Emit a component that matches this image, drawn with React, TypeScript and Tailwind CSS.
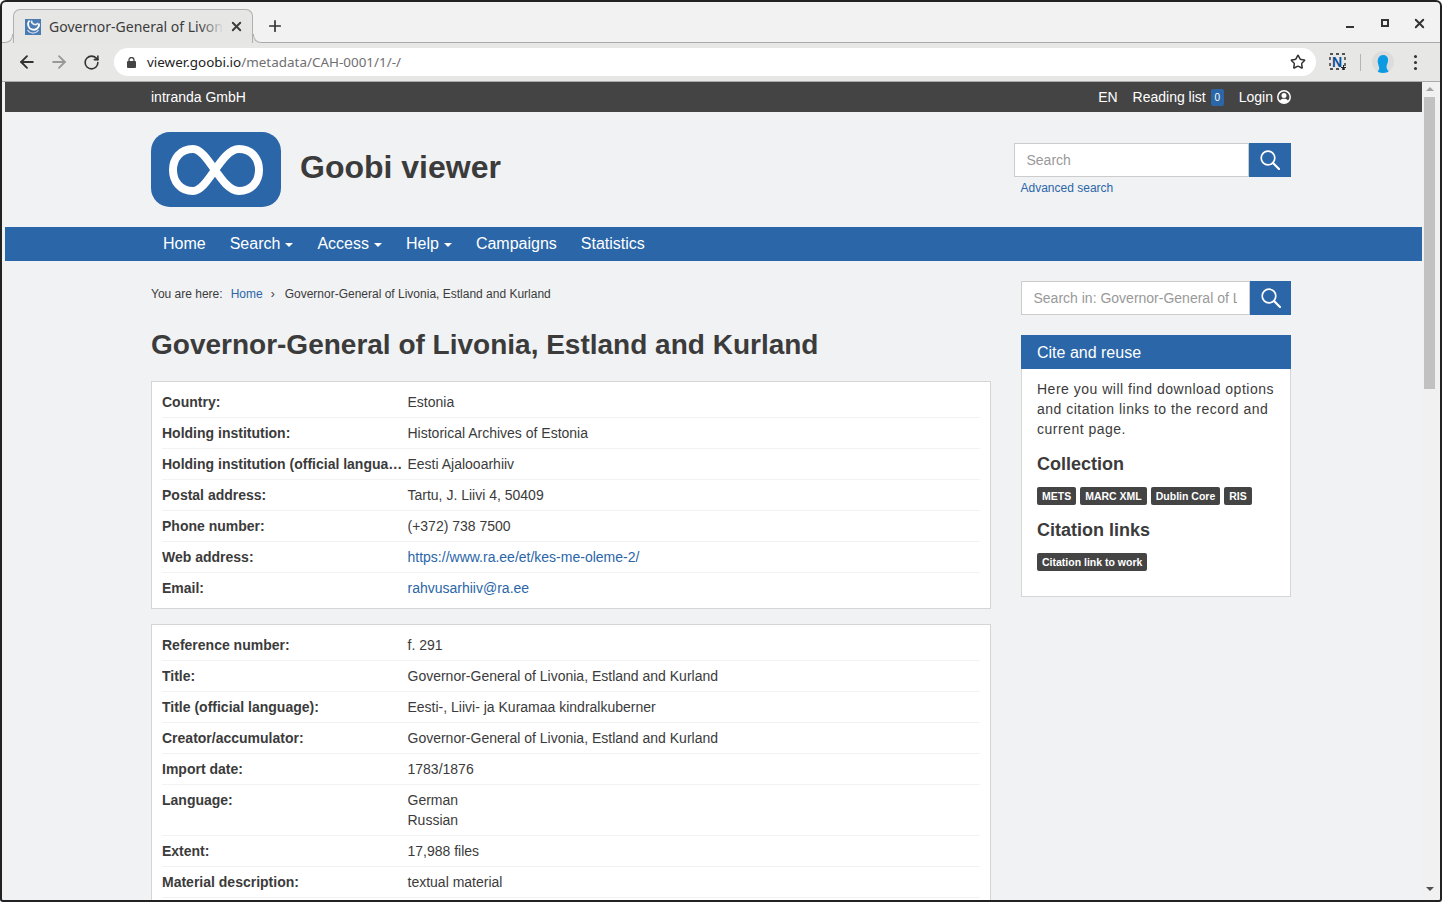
import { Star, ArrowLeft, ArrowRight, RotateCw, X, Plus } from "lucide-react";

const firstTable: [string, string, boolean?][] = [
  ["Country:", "Estonia"],
  ["Holding institution:", "Historical Archives of Estonia"],
  ["Holding institution (official language):", "Eesti Ajalooarhiiv"],
  ["Postal address:", "Tartu, J. Liivi 4, 50409"],
  ["Phone number:", "(+372) 738 7500"],
  ["Web address:", "https://www.ra.ee/et/kes-me-oleme-2/", true],
  ["Email:", "rahvusarhiiv@ra.ee", true],
];

const secondTable: [string, string][] = [
  ["Reference number:", "f. 291"],
  ["Title:", "Governor-General of Livonia, Estland and Kurland"],
  ["Title (official language):", "Eesti-, Liivi- ja Kuramaa kindralkuberner"],
  ["Creator/accumulator:", "Governor-General of Livonia, Estland and Kurland"],
  ["Import date:", "1783/1876"],
  ["Language:", "German\nRussian"],
  ["Extent:", "17,988 files"],
  ["Material description:", "textual material"],
];

function Row({ label, value, link, last }: { label: string; value: string; link?: boolean; last?: boolean }) {
  return (
    <div className={`flex pt-[5px] pb-[5px] leading-[20px] ${last ? "" : "border-b border-[#f1f2f4]"}`}>
      <div className="w-[245.5px] shrink-0 truncate pr-1 font-bold">{label}</div>
      <div className={`whitespace-pre-line ${link ? "text-[#2a66a8]" : ""}`}>{value}</div>
    </div>
  );
}

function SearchBox({ placeholder, inputWidth, buttonWidth }: { placeholder: string; inputWidth: string; buttonWidth: string }) {
  return (
    <div className="flex h-[34px]">
      <div className={`flex items-center overflow-hidden whitespace-nowrap border border-[#ccc] bg-white pl-[11.5px] pr-3 text-[14px] text-[#999] ${inputWidth}`}>
        <span className="block w-full overflow-hidden">{placeholder}</span>
      </div>
      <div className={`flex items-center justify-center bg-[#2a66a8] text-white ${buttonWidth}`}>
        <svg width="20" height="20" viewBox="0 0 20 20" fill="none" stroke="currentColor">
          <circle cx="8" cy="8" r="6.8" strokeWidth="1.7" />
          <path d="M13 13l6 6" strokeWidth="2.2" strokeLinecap="round" />
        </svg>
      </div>
    </div>
  );
}

function NavItem({ label, caret }: { label: string; caret?: boolean }) {
  return (
    <div className="flex items-center px-3">
      {label}
      {caret && <span className="ml-[5px] mt-[2px] h-0 w-0 border-x-4 border-t-4 border-x-transparent border-t-white" />}
    </div>
  );
}

function Badge({ label }: { label: string }) {
  return (
    <span className="rounded-[2px] bg-[#444] px-[5px] text-[10.5px] font-bold leading-[18px] text-white">{label}</span>
  );
}

export default function App() {
  return (
    <div className="h-[902px] w-[1442px] overflow-hidden rounded-t-[6px] rounded-b-[3px] bg-[#222] p-[2px] font-['Liberation_Sans',Arial,sans-serif]">
      <div className="flex h-[898px] flex-col overflow-hidden rounded-t-[4px] rounded-b-[1px] bg-[#f2f2f2]">
        {/* tab strip */}
        <div className="relative flex h-[41px] shrink-0 items-end border-b border-[#a9a9a9] pl-[11px] font-['Noto_Sans',sans-serif]">
          <div className="relative -mb-px flex h-[34px] w-[240px] items-center rounded-t-[7px] border border-b-0 border-[#b0b0b0] bg-[#e6e6e5] pl-[11px] pr-[8px] text-[14px] text-[#3c3c3c]">
            <span className="absolute -left-[9px] bottom-0 h-[9px] w-[8px] bg-[#e6e6e5]">
              <span className="block h-[9px] w-[8px] rounded-br-[8px] border-b border-r border-[#b0b0b0] bg-[#f2f2f2]" />
            </span>
            <span className="absolute -right-[9px] bottom-0 h-[9px] w-[8px] bg-[#e6e6e5]">
              <span className="block h-[9px] w-[8px] rounded-bl-[8px] border-b border-l border-[#b0b0b0] bg-[#f2f2f2]" />
            </span>
            <svg width="16" height="16" viewBox="0 0 16 16" className="shrink-0">
              <rect width="16" height="16" fill="#4a7bb3" />
              <path d="M4.500 1.500a5.500 5.500 0 1 0 9.500 3" fill="none" stroke="#fff" strokeWidth="1.800" />
              <path d="M6.500 1.500a3.600 3.600 0 0 0 6.500 2.500" fill="none" stroke="#e8eef6" strokeWidth="1.600" />
              <path d="M2.500 11a6.500 6.500 0 0 0 11 0" fill="none" stroke="#cfdcec" strokeWidth="1.200" />
            </svg>
            <span className="relative mb-[1px] ml-2 w-[175px] overflow-hidden whitespace-nowrap">
              Governor-General of Livonia
              <span className="absolute inset-y-0 right-0 w-[24px] bg-gradient-to-r from-transparent to-[#e6e6e5]" />
            </span>
            <X size={15} strokeWidth={3} className="ml-auto text-[#3c3c3c]" />
          </div>
          <Plus size={18} strokeWidth={2.25} className="mb-[7px] ml-[13px] text-[#333]" />
          <div className="absolute right-[13px] top-[13px] flex h-[16px] items-center text-[#333]">
            <span className="mt-[7px] h-[2px] w-[8px] bg-[#333]" />
            <span className="ml-[27px] h-[8px] w-[8px] border-2 border-[#333]" />
            <X size={15} strokeWidth={3} className="ml-[23px]" />
          </div>
        </div>
        {/* toolbar */}
        <div className="flex h-[39px] shrink-0 items-center border-b border-[#a9a9a9] bg-[#e7e7e6] font-['Noto_Sans',sans-serif]">
          <ArrowLeft size={20} strokeWidth={2.25} className="ml-[15px] text-[#333]" />
          <ArrowRight size={20} strokeWidth={2.25} className="ml-[12px] text-[#999]" />
          <RotateCw size={17} strokeWidth={2.25} className="ml-[14px] text-[#333]" />
          <div className="ml-[14px] flex h-[28px] w-[1202px] items-center rounded-full bg-white pl-[13px] text-[13.45px]">
            <svg width="9" height="11" viewBox="0 0 9 11">
              <path d="M2 4.500V3a2.500 2.500 0 0 1 5 0v1.500" fill="none" stroke="#444" strokeWidth="1.300" />
              <rect y="4" width="9" height="7" rx="1" fill="#444" />
            </svg>
            <span className="ml-[11px] text-[#222]">viewer.goobi.io</span>
            <span className="text-[#6f6f6f]">/metadata/CAH-0001/1/-/</span>
            <Star size={16} strokeWidth={2.25} className="ml-auto mr-[10px] text-[#333]" />
          </div>
          <svg width="18" height="18" viewBox="0 0 18 18" className="ml-[13px]">
            <rect x="1" y="1" width="15" height="15" fill="none" stroke="#222" strokeWidth="1.300" strokeDasharray="3 3" />
            <text x="3" y="14" fontSize="14" fontWeight="700" fill="#0b4f9e" fontFamily="Liberation Sans">N</text>
            <path d="M14.500 12v5M12 14.500h5" stroke="#222" strokeWidth="1" />
          </svg>
          <span className="ml-[13px] h-[17px] w-px bg-[#b5b5b5]" />
          <span className="ml-[11px] flex h-[22px] w-[22px] items-end justify-center overflow-hidden rounded-full bg-[#dcdcdc]">
            <svg width="12" height="18" viewBox="0 0 12 18">
              <path d="M6 0c3.500 0 5.500 2.500 5 6-.4 2.500-1.500 4-1.500 6 0 1.500 1 3 2 4v2H1v-2c1-1 1.500-2 1-4C1.500 10 1 9 .8 7.500.3 3.500 2.500 0 6 0z" fill="#0b9be3" />
            </svg>
          </span>
          <span className="ml-[20px] flex flex-col gap-[3px]">
            <span className="h-[3px] w-[3px] rounded-full bg-[#333]" />
            <span className="h-[3px] w-[3px] rounded-full bg-[#333]" />
            <span className="h-[3px] w-[3px] rounded-full bg-[#333]" />
          </span>
        </div>
        {/* page + scrollbar */}
        <div className="flex min-h-0 flex-1 pl-[3px]">
          <div className="w-[1417px] min-w-0 bg-[#f1f2f4] text-[14px] text-[#3b3b3b]">
            <div className="flex h-[30px] items-center justify-between bg-[#444] pl-[146px] pr-[131px] text-[14px] text-white">
              <span>intranda GmbH</span>
              <div className="flex items-center">
                <span>EN</span>
                <span className="ml-[15px]">Reading list</span>
                <span className="ml-[5px] flex h-[17px] w-[13px] items-center justify-center rounded-[2px] bg-[#2a66a8] text-[10px]">0</span>
                <span className="ml-[15px]">Login</span>
                <svg width="14" height="14" viewBox="0 0 14 14" className="ml-[4px]">
                  <circle cx="7" cy="7" r="6.2" fill="none" stroke="#fff" strokeWidth="1.500" />
                  <circle cx="7" cy="5.400" r="2.500" fill="#fff" />
                  <path d="M2.800 11.300C3.500 9.400 5 8.800 7 8.800s3.500.6 4.200 2.500C10 12.500 8.500 13 7 13s-3-.5-4.200-1.700z" fill="#fff" />
                </svg>
              </div>
            </div>

            <div className="flex h-[115px] pl-[146px] pr-[131px] pt-[20px]">
              <div className="flex h-[75px] w-[130px] items-center justify-center rounded-[19px] bg-[#2a66a8]">
                <svg width="96" height="54" viewBox="0 0 96 54">
                  <path d="M25 6C12 6 5 16 5 27s7 21 20 21c15 0 28-42 46-42 13 0 20 10 20 21s-7 21-20 21C53 48 40 6 25 6z" fill="none" stroke="#fff" strokeWidth="8" />
                </svg>
              </div>
              <div className="ml-[19px] mt-[16px] text-[32px] font-bold leading-[38px]">Goobi viewer</div>
              <div className="ml-auto mt-[11px] w-[277px]">
                <SearchBox placeholder="Search" inputWidth="w-[235px]" buttonWidth="w-[42px]" />
                <div className="ml-[6.5px] mt-[4px] text-[12px] leading-[14px] text-[#2a66a8]">Advanced search</div>
              </div>
            </div>

            <div className="flex h-[34px] items-center bg-[#2a66a8] pl-[146px] text-[16px] text-white">
              <NavItem label="Home" />
              <NavItem label="Search" caret />
              <NavItem label="Access" caret />
              <NavItem label="Help" caret />
              <NavItem label="Campaigns" />
              <NavItem label="Statistics" />
            </div>

            <div className="flex pl-[146px] pt-[20px]">
              <main className="w-[840px]">
                <div className="flex h-[26px] items-center text-[12px]">
                  <span>You are here:</span>
                  <span className="ml-[8px] text-[#2a66a8]">Home</span>
                  <span className="ml-[8px] mr-[10px]">›</span>
                  <span>Governor-General of Livonia, Estland and Kurland</span>
                </div>
                <h1 className="mt-[20px] text-[28px] font-bold leading-[36px]">Governor-General of Livonia, Estland and Kurland</h1>
                <div className="mt-[18px] border border-[#d5d5d5] bg-white px-[10px] pb-[5px] pt-[4.5px]">
                  {firstTable.map(([label, value, link], i) => (
                    <Row key={label} label={label} value={value} link={link} last={i === firstTable.length - 1} />
                  ))}
                </div>
                <div className="mt-[15px] border border-[#d5d5d5] bg-white px-[10px] pb-[4.5px] pt-[5.5px]">
                  {secondTable.map(([label, value]) => (
                    <Row key={label} label={label} value={value} />
                  ))}
                </div>
              </main>
              <aside className="ml-[30px] w-[270px]">
                <SearchBox placeholder="Search in: Governor-General of Livonia" inputWidth="w-[229px]" buttonWidth="w-[41px]" />
                <div className="mt-[20px] border-x border-b border-[#d5d5d5] bg-white">
                  <div className="-mx-px flex h-[34px] items-center bg-[#2a66a8] px-[16px] pt-[2px] text-[16px] text-white">Cite and reuse</div>
                  <div className="px-[15px] pb-[25px] pt-[10px]">
                    <p className="leading-[20px] tracking-[0.5px]">Here you will find download options and citation links to the record and current page.</p>
                    <h3 className="mt-[12px] text-[18px] font-bold leading-[26px]">Collection</h3>
                    <div className="mt-[10px] flex gap-[4px]">
                      <Badge label="METS" />
                      <Badge label="MARC XML" />
                      <Badge label="Dublin Core" />
                      <Badge label="RIS" />
                    </div>
                    <h3 className="mt-[12px] text-[18px] font-bold leading-[26px]">Citation links</h3>
                    <div className="mt-[10px] flex">
                      <Badge label="Citation link to work" />
                    </div>
                  </div>
                </div>
              </aside>
            </div>
          </div>
          {/* scrollbar */}
          <div className="relative w-[16px] shrink-0 bg-[#f1f1f1]">
            <span className="absolute left-[7.5px] top-[5px] h-0 w-0 -translate-x-1/2 border-x-[4px] border-b-[4px] border-x-transparent border-b-[#a3a3a3]" />
            <div className="ml-[2px] mt-[15px] h-[292px] w-[11px] bg-[#c1c1c1]" />
            <span className="absolute bottom-[9px] left-[7.5px] h-0 w-0 -translate-x-1/2 border-x-[4px] border-t-[4px] border-x-transparent border-t-[#505050]" />
          </div>
        </div>
      </div>
    </div>
  );
}
